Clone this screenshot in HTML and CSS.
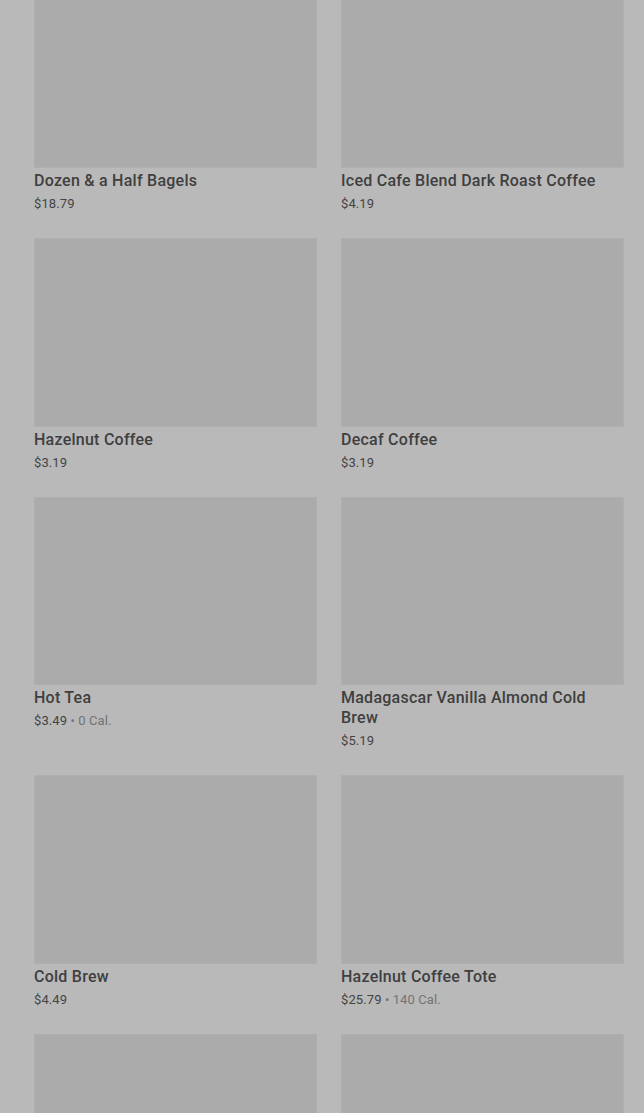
FILE: index.html
```html
<!DOCTYPE html>
<html lang="en">

<head>
    <meta charset="UTF-8">
    <meta name="viewport" content="width=device-width, initial-scale=1.0">
    <title>Menu</title>
    <link rel="stylesheet" href="styles.css">
</head>

<body>

    <div class="product-grid">
        <div class="product-card">
            <div class="product-image"></div>
            <h3 class="product-name">Dozen &amp; a Half Bagels</h3>
            <p class="product-price">$18.79</p>
        </div>
        <div class="product-card">
            <div class="product-image"></div>
            <h3 class="product-name">Iced Cafe Blend Dark Roast Coffee</h3>
            <p class="product-price">$4.19</p>
        </div>

        <div class="product-card">
            <div class="product-image"></div>
            <h3 class="product-name">Hazelnut Coffee</h3>
            <p class="product-price">$3.19</p>
        </div>
        <div class="product-card">
            <div class="product-image"></div>
            <h3 class="product-name">Decaf Coffee</h3>
            <p class="product-price">$3.19</p>
        </div>

        <div class="product-card">
            <div class="product-image"></div>
            <h3 class="product-name">Hot Tea</h3>
            <p class="product-price">$3.49 <span class="calories">• 0 Cal.</span></p>
        </div>
        <div class="product-card">
            <div class="product-image"></div>
            <h3 class="product-name">Madagascar Vanilla Almond Cold Brew</h3>
            <p class="product-price">$5.19</p>
        </div>

        <div class="product-card">
            <div class="product-image"></div>
            <h3 class="product-name">Cold Brew</h3>
            <p class="product-price">$4.49</p>
        </div>
        <div class="product-card">
            <div class="product-image"></div>
            <h3 class="product-name">Hazelnut Coffee Tote</h3>
            <p class="product-price">$25.79 <span class="calories">• 140 Cal.</span></p>
        </div>

        <div class="product-card">
            <div class="product-image"></div>
        </div>
        <div class="product-card">
            <div class="product-image"></div>
        </div>
    </div>

</body>

</html>
```

FILE: styles.css
```css
/* Page (dimmed behind an overlay) */
html,
body {
    overflow: hidden;
}

body {
    margin: 0;
    padding: 0 20px 0 34px;
    background: #b9b9b9;
    font-family: Roboto, "Liberation Sans", sans-serif;
    color: #3f3f3f;
}

.product-grid {
    display: grid;
    grid-template-columns: 1fr 1fr;
    column-gap: 24px;
    row-gap: 24px;
    margin-top: -20.5px;
}

.product-image {
    aspect-ratio: 3 / 2;
    background: #ababab;
    border: 1px solid #afafaf;
    box-sizing: border-box;
}

.product-name {
    margin: 3px 0 0;
    font-size: 16px;
    line-height: 20px;
    font-weight: 500;
    letter-spacing: 0.25px;
}

.product-price {
    margin: 3px 0 0;
    font-size: 13px;
    line-height: 20px;
    letter-spacing: 0.1px;
    color: #444;
}

.calories {
    color: #737373;
}
```
